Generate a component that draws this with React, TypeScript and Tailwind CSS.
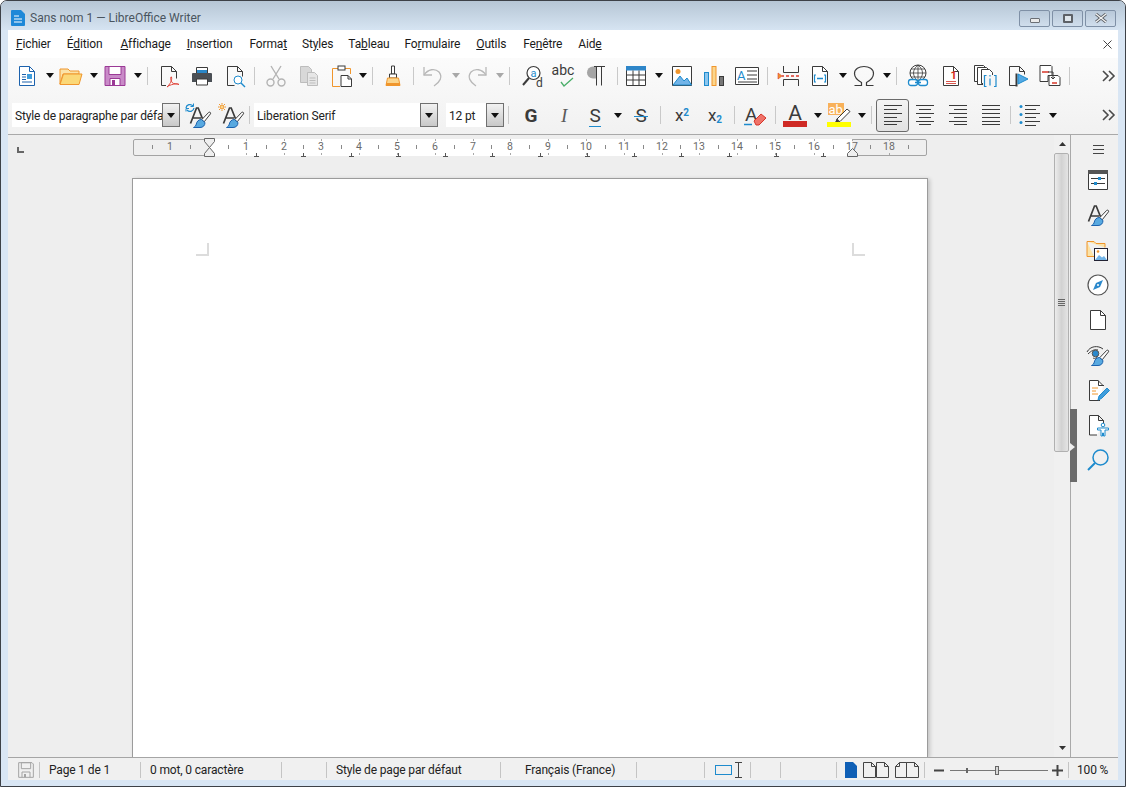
import type { ReactNode } from 'react';

const DARK = '#3b3b3b';
const BLUE = '#1e8bcd';
const ORANGE = '#f0962d';
const FONT = 'Roboto, sans-serif';

// Shared frame for the 24px toolbar glyphs
function Ico({ children, className = '', size = 24 }: { children: ReactNode; className?: string; size?: number }) {
  return (
    <svg width={size} height={size} viewBox="0 0 24 24" fill="none" strokeWidth="1" className={`shrink-0 overflow-visible ${className}`}>
      {children}
    </svg>
  );
}

function Caret({ className = '', grey = false }: { className?: string; grey?: boolean }) {
  return (
    <div className={`w-[10px] shrink-0 flex justify-center ${className}`}>
      <svg width="8" height="5" viewBox="0 0 8 5"><path d="M0 0h8L4 5z" fill={grey ? '#a8a8a8' : '#111'} /></svg>
    </div>
  );
}

function Sep({ className = '' }: { className?: string }) {
  return <div className={`w-px h-[18px] shrink-0 bg-[#c9c9c9] ${className}`} />;
}

function More() {
  return (
    <svg width="16" height="14" viewBox="0 0 16 14" fill="none" stroke="#4a4a4a" strokeWidth="1.6" className="shrink-0">
      <path d="M2 2l5 5-5 5M8 2l5 5-5 5" />
    </svg>
  );
}

function Page({ stroke = DARK, fill = '#fff' }: { stroke?: string; fill?: string }) {
  return (
    <>
      <path d="M4.5 2.5h10l5 5v14h-15z" stroke={stroke} fill={fill} />
      <path d="M14.5 2.5v5h5" stroke={stroke} />
    </>
  );
}

/* ---------- standard toolbar icons ---------- */
const NewDoc = () => (
  <Ico>
    <Page stroke="#1c62ad" />
    <path d="M7 10.5h4M7 13h4M7 15.500h4M7 18h10" stroke="#1c62ad" />
    <rect x="12" y="10" width="5" height="5" fill="#3f9ddc" />
  </Ico>
);
const OpenIco = () => (
  <Ico>
    <path d="M1 5h8l2 2h9v3H4L1 20z" fill="#fbe3a8" stroke={ORANGE} />
    <path d="M1 20.500L4.500 10H23l-3 10.500z" fill="#fbd878" stroke={ORANGE} />
  </Ico>
);
const SaveIco = () => (
  <Ico>
    <path d="M2 2.500h20v19H2z" fill="#c98bc8" stroke="#9b3a96" />
    <path d="M6 2.500h12v8H6z" fill="#fff" stroke="#9b3a96" />
    <path d="M7 21.500v-7h10v7z" fill="#fff" stroke="#9b3a96" />
    <rect x="9" y="16" width="3" height="5" fill="#9b3a96" />
  </Ico>
);
const PdfIco = () => (
  <Ico>
    <path d="M9 21.500H4.500v-19h10l5 5v7M14.500 2.500v5h5" stroke={DARK} />
    <path d="M10 23c2.500-2 5.500-7 4.500-10-1.500-1-1 3.500 1 6 1 1 5 .5 6.500 1.500-2.500-1.500-9 0-12 2.500z" stroke="#e0443a" fill="#fff" />
  </Ico>
);
const PrintIco = () => (
  <Ico>
    <path d="M6.500 9V3.500h11V9" stroke={DARK} fill="#fff" />
    <rect x="7" y="6" width="10" height="3" fill="#2b87c8" />
    <path d="M2 10a1 1 0 011-1h18a1 1 0 011 1v8H2z" fill="#4a4f55" />
    <path d="M6.500 15h11v6h-11z" fill="#fff" stroke={DARK} />
  </Ico>
);
const PreviewIco = () => (
  <Ico>
    <path d="M4.500 2.500h10l5 5v5M14.500 2.500v5h5M4.500 2.500v19h7" stroke={DARK} />
    <circle cx="15" cy="16" r="4" stroke={BLUE} fill="#fff" />
    <path d="M18 19l4 4" stroke={BLUE} strokeWidth="1.500" />
  </Ico>
);
const CutIco = () => (
  <Ico>
    <g stroke="#b4b4b4" strokeWidth="1.400">
      <path d="M7 2l8 13M17 2L9 15" />
      <circle cx="6.500" cy="18.500" r="3.500" />
      <circle cx="17.500" cy="18.500" r="3.500" />
    </g>
  </Ico>
);
const CopyIco = () => (
  <Ico>
    <path d="M3.500 2.500h8l3 3v13h-11z" fill="#d8d8d8" stroke="#bdbdbd" />
    <path d="M10.500 8.500h7l3 3v10h-10z" fill="#e6e6e6" stroke="#bdbdbd" />
    <path d="M12.500 14h6M12.500 16.500h6M12.500 19h6" stroke="#bdbdbd" />
  </Ico>
);
const PasteIco = () => (
  <Ico>
    <path d="M8 4.500H2.500v18H10M15 4.500h5.500V10" stroke={ORANGE} />
    <rect x="8" y="2" width="7" height="4" fill="#fff" stroke={DARK} />
    <path d="M11 11.500h7l3.500 3.500v7.500H11z" fill="#fff" stroke={DARK} />
    <path d="M18 11.500V15h3.500" stroke={DARK} />
  </Ico>
);
const BrushIco = () => (
  <Ico>
    <path d="M10.500 2h3v8h-3z" stroke={DARK} fill="#fff" />
    <path d="M8.500 10h7v4h-7z" stroke={DARK} fill="#fff" />
    <path d="M6.500 14h11l1.500 7.500H5z" fill="#fbd58c" stroke={ORANGE} />
    <path d="M5 19h14v2.500H5z" fill={ORANGE} />
  </Ico>
);
const UndoIco = ({ flip = false }: { flip?: boolean }) => (
  <Ico className={flip ? '-scale-x-100' : ''}>
    <path d="M3 3v8h8" stroke="#b8b8b8" strokeWidth="1.300" />
    <path d="M3 11c4-6 11-7 15-3 4 5 1 10-5 14" stroke="#b8b8b8" strokeWidth="1.300" />
  </Ico>
);
const FindIco = () => (
  <Ico>
    <circle cx="12.500" cy="9" r="6.500" stroke={DARK} fill="#fff" strokeWidth="1.200" />
    <path d="M8 14l-6 7" stroke={DARK} strokeWidth="2" />
    <text x="12.500" y="12.500" fontSize="11" textAnchor="middle" fill={BLUE} fontFamily={FONT}>a</text>
    <text x="15" y="22.500" fontSize="12" fill={DARK} fontFamily={FONT}>d</text>
  </Ico>
);
const AbcIco = () => (
  <Ico>
    <text x="12" y="11" fontSize="14" textAnchor="middle" fill={DARK} fontFamily={FONT}>abc</text>
    <path d="M10 18l3 4 9-8" stroke="#4bae6a" strokeWidth="1.300" />
  </Ico>
);
const ParaIco = () => (
  <Ico>
    <path d="M11 2.500H8a6 6 0 000 12h3z" fill="#a5a5a5" />
    <path d="M11.500 2.500v19M16.500 2.500v19M9 2.500h11" stroke={DARK} />
  </Ico>
);
const TableIco = () => (
  <Ico>
    <path d="M2.500 2.500h19v19h-19z" fill="#fff" stroke={DARK} />
    <rect x="2" y="2" width="20" height="4.500" fill="#2e86c9" />
    <path d="M2.500 11h19M2.500 16h19M9 6.500v15M15 6.500v15" stroke={DARK} />
  </Ico>
);
const ImageIco = () => (
  <Ico>
    <path d="M2.500 2.500h19v19h-19z" fill="#fff" stroke={DARK} />
    <circle cx="8" cy="7.500" r="2.500" fill={ORANGE} />
    <path d="M3 21l7-9 4 5 3-3 4.500 7z" fill="#72b4e8" stroke={BLUE} />
  </Ico>
);
const ChartIco = () => (
  <Ico>
    <rect x="2.500" y="8.500" width="4" height="13" fill="#8cc6ee" stroke={BLUE} />
    <rect x="10" y="2.500" width="4" height="19" fill="#fbd58c" stroke={ORANGE} />
    <rect x="17.500" y="12.500" width="4" height="9" fill="#777" stroke={DARK} />
  </Ico>
);
const TextBoxIco = () => (
  <Ico>
    <path d="M.500 3.500h23v17H.500z" fill="#fff" stroke={DARK} />
    <text x="2" y="16" fontSize="13" fill={BLUE} fontFamily={FONT}>A</text>
    <path d="M12 7h10M12 11h10M12 15h10M3 18h19" stroke={DARK} />
  </Ico>
);
const BreakIco = () => (
  <Ico>
    <path d="M6.500 2v6.500h15V2M6.500 22v-6.500h15V22" stroke={DARK} />
    <path d="M5 12h2M9 12h3M14 12h3M19 12h3" stroke="#dc3a2d" strokeWidth="1.400" />
    <path d="M1 9v6l4-3z" fill={ORANGE} stroke="#dc3a2d" strokeWidth=".6" />
  </Ico>
);
const FieldIco = () => (
  <Ico>
    <Page />
    <path d="M8 11H6.500v7H8M16 11h1.500v7H16" stroke={BLUE} strokeWidth="1.200" />
    <path d="M9 14.500h6" stroke={BLUE} strokeWidth="1.500" />
  </Ico>
);
const OmegaIco = () => (
  <Ico>
    <path d="M2.500 21.500h7v-3C5 16 2.500 13 2.500 9.500 2.500 5 7 2.500 12 2.500s9.500 2.500 9.500 7c0 3.500-2.500 6.500-7 9v3h7" stroke={DARK} strokeWidth="1.200" />
  </Ico>
);
const LinkIco = () => (
  <Ico>
    <circle cx="12" cy="9" r="8" stroke={DARK} fill="#fff" />
    <path d="M4 9h16M12 1v16M12 1c-6 5-6 11 0 16M12 1c6 5 6 11 0 16M5 5h14M5 13h14" stroke={DARK} strokeWidth=".8" />
    <rect x="2.500" y="15.500" width="9" height="6" rx="2.500" stroke={BLUE} fill="#fff" strokeWidth="1.300" />
    <rect x="12.500" y="15.500" width="9" height="6" rx="2.500" stroke={BLUE} fill="#fff" strokeWidth="1.300" />
    <path d="M9 18.500h6" stroke={BLUE} strokeWidth="1.300" />
  </Ico>
);
const NoteIco = () => (
  <Ico>
    <Page />
    <text x="11.500" y="15" fontSize="11" fontWeight="bold" fill="#d62c20" fontFamily={FONT}>1</text>
    <path d="M7 17.500h10M7 19.500h10" stroke="#d8574d" />
  </Ico>
);
const PagesIco = () => (
  <Ico>
    <path d="M1.500 1.500h9l3 3v13h-12z" fill="#fff" stroke={DARK} />
    <path d="M4.500 3.500h9l3 3v14h-12z" fill="#fff" stroke={DARK} />
    <path d="M8.500 5.500h8l3 3v11h-11z" fill="#fff" stroke={DARK} />
    <rect x="10" y="11" width="14" height="12" fill="#f6f6f6" />
    <path d="M13.500 11.500h-2v11h2M21 11.500h2v11h-2M17 11v1.500M17 14.500v7" stroke={BLUE} strokeWidth="1.200" />
  </Ico>
);
const FlagIco = () => (
  <Ico>
    <path d="M11 21.500H3.500v-19h10l5 5v3M13.500 2.500v5h5" stroke={DARK} />
    <path d="M9.500 9.500h2v13h-2z" fill={DARK} />
    <path d="M12 10l10 5-10 5z" fill="#53a9e4" stroke={BLUE} />
  </Ico>
);
const CompareIco = () => (
  <Ico>
    <path d="M2 1.500h11l1 1v9h-4v6H2z" fill="#fff" stroke={DARK} />
    <path d="M4 8h7" stroke="#d9372a" strokeWidth="1.400" />
    <path d="M11 11.500h9l2 2v8h-11z" fill="#fff" stroke={DARK} />
    <path d="M14 19h5" stroke="#d9372a" strokeWidth="1.400" />
    <path d="M10 8h5v7M13 13l2 2 2-2" stroke={DARK} />
  </Ico>
);

/* ---------- formatting toolbar icons ---------- */
const BrushTip = () => (
  <>
    <path d="M20.800 7.300c1-.6 2.300.4 1.700 1.500l-6.300 8-2.600-2z" fill="#fff" stroke={DARK} />
    <path d="M13.500 14.500c-3 0-4.700 2-5.200 4.500-.3 1.500-1.300 2.800-2.800 3.500h6.500c3 0 5-2 5-5z" fill="#58a9e0" stroke="#1c62ad" />
  </>
);
const StyleA = () => (
  <>
    <path d="M2.500 18.500L8.500 3h1.700l4.800 12M5 13h8" stroke={DARK} strokeWidth="1.700" />
    <BrushTip />
  </>
);
const StyleUpdateIco = () => (
  <Ico>
    <g transform="translate(3 2)"><StyleA /></g>
    <path d="M1 5a4 4 0 017-2M9 5a4 4 0 01-7 2" stroke={BLUE} strokeWidth="1.300" />
    <path d="M8.500 .5v3h-3M1 8.500v-3h3" stroke={BLUE} />
  </Ico>
);
const StyleNewIco = () => (
  <Ico>
    <g transform="translate(3 2)"><StyleA /></g>
    <circle cx="4" cy="4" r="2" fill="#fbd58c" stroke={ORANGE} />
    <path d="M4 0v1M4 7v1M0 4h1M7 4h1M1 1l1 1M6 6l1 1M7 1L6 2M1 7l1-1" stroke={ORANGE} />
  </Ico>
);
const ClearIco = () => (
  <Ico>
    <text x="1" y="18" fontSize="19" fill={DARK} fontFamily={FONT}>A</text>
    <path d="M0 21.500h8" stroke={BLUE} strokeWidth="1.400" />
    <path d="M10 18l7-7 5 4-7 7h-3z" fill="#ef7369" stroke="#d6352a" />
  </Ico>
);
const FontColorIco = () => (
  <Ico>
    <text x="12" y="16.500" fontSize="21" textAnchor="middle" fill={DARK} fontFamily={FONT}>A</text>
    <rect x="0" y="18" width="24" height="6" fill="#cf2a25" />
  </Ico>
);
const HighlightIco = () => (
  <Ico>
    <rect x="1" y="0" width="16" height="12" fill="#f8b15a" />
    <text x="1.500" y="11" fontSize="13" fill="#fff" fontFamily={FONT}>ab</text>
    <path d="M10 16L20 6l3 2.500-10 10-4 1z" fill="#fff" stroke={DARK} />
    <path d="M8 19.500l2-4 3 3z" fill={DARK} />
    <rect x="0" y="19" width="24" height="5" fill="#ffff00" />
  </Ico>
);
const AlignIco = ({ lines }: { lines: string }) => (
  <Ico>
    <path d={lines} stroke={DARK} />
  </Ico>
);
const BulletIco = () => (
  <Ico>
    <circle cx="2" cy="3.500" r="1.500" fill={BLUE} />
    <circle cx="2" cy="11.500" r="1.500" fill={BLUE} />
    <circle cx="2" cy="19.500" r="1.500" fill={BLUE} />
    <path d="M6 2.500h15M6 6.500h11M6 10.500h15M6 14.500h11M6 18.500h15M6 22.500h11" stroke={DARK} />
  </Ico>
);

function Combo({ text, className }: { text: string; className: string }) {
  return (
    <div className={`h-[24px] shrink-0 flex bg-white ${className}`}>
      <div className="flex-1 min-w-0 overflow-hidden whitespace-nowrap pl-[3px] leading-[26px]">{text}</div>
      <div className="w-[18px] shrink-0 flex items-center justify-center border border-[#707070] bg-gradient-to-b from-[#f2f2f2] to-[#c8c8c8]">
        <svg width="8" height="5" viewBox="0 0 8 5"><path d="M0 0h8L4 5z" fill="#111" /></svg>
      </div>
    </div>
  );
}

function MenuBar() {
  return (
    <div className="h-[28px] flex items-center bg-white text-[12px] tracking-[-0.15px] text-[#1a1a1a]">
      <span className="ml-[8px]"><u>F</u>ichier</span>
      <span className="ml-[16px]">É<u>d</u>ition</span>
      <span className="ml-[18px]"><u>A</u>ffichage</span>
      <span className="ml-[16px]"><u>I</u>nsertion</span>
      <span className="ml-[17px]">Forma<u>t</u></span>
      <span className="ml-[15px]">St<u>y</u>les</span>
      <span className="ml-[15px]">Ta<u>b</u>leau</span>
      <span className="ml-[15px]">Fo<u>r</u>mulaire</span>
      <span className="ml-[16px]"><u>O</u>utils</span>
      <span className="ml-[17px]">Fe<u>n</u>être</span>
      <span className="ml-[16px]">Aid<u>e</u></span>
      <svg width="9" height="9" viewBox="0 0 9 9" stroke="#444" className="ml-auto mr-[6px] shrink-0">
        <path d="M.5.5l8 8M8.500.5l-8 8" />
      </svg>
    </div>
  );
}

function StandardBar() {
  return (
    <div className="h-[35px] flex items-center">
      <div className="ml-[7px]"><NewDoc /></div>
      <Caret className="ml-[6px]" />
      <div className="ml-[4px]"><OpenIco /></div>
      <Caret className="ml-[6px]" />
      <div className="ml-[4px]"><SaveIco /></div>
      <Caret className="ml-[6px]" />
      <Sep className="ml-[4px]" />
      <div className="ml-[9px]"><PdfIco /></div>
      <div className="ml-[9px]"><PrintIco /></div>
      <div className="ml-[9px]"><PreviewIco /></div>
      <Sep className="ml-[7px]" />
      <div className="ml-[9px]"><CutIco /></div>
      <div className="ml-[9px]"><CopyIco /></div>
      <div className="ml-[9px]"><PasteIco /></div>
      <Caret className="ml-[4px]" />
      <Sep className="ml-[4px]" />
      <div className="ml-[8px]"><BrushIco /></div>
      <Sep className="ml-[8px]" />
      <div className="ml-[7px]"><UndoIco /></div>
      <Caret grey className="ml-[6px]" />
      <div className="ml-[4px]"><UndoIco flip /></div>
      <Caret grey className="ml-[6px]" />
      <Sep className="ml-[4px]" />
      <div className="ml-[11px]"><FindIco /></div>
      <div className="ml-[6px]"><AbcIco /></div>
      <div className="ml-[10px]"><ParaIco /></div>
      <Sep className="ml-[8px]" />
      <div className="ml-[6px]"><TableIco /></div>
      <Caret className="ml-[6px]" />
      <div className="ml-[6px]"><ImageIco /></div>
      <div className="ml-[8px]"><ChartIco /></div>
      <div className="ml-[9px]"><TextBoxIco /></div>
      <Sep className="ml-[8px]" />
      <div className="ml-[9px]"><BreakIco /></div>
      <div className="ml-[7px]"><FieldIco /></div>
      <Caret className="ml-[6px]" />
      <div className="ml-[4px]"><OmegaIco /></div>
      <Caret className="ml-[6px]" />
      <Sep className="ml-[4px]" />
      <div className="ml-[9px]"><LinkIco /></div>
      <div className="ml-[9px]"><NoteIco /></div>
      <div className="ml-[10px]"><PagesIco /></div>
      <div className="ml-[9px]"><FlagIco /></div>
      <div className="ml-[8px]"><CompareIco /></div>
      <Sep className="ml-[7px]" />
      <div className="ml-auto mr-[1px]"><More /></div>
    </div>
  );
}

function FormatBar() {
  return (
    <div className="h-[42px] flex items-center border-b border-[#a9a9a9] text-[12px] tracking-[-0.15px] text-[#222] pt-[3px]">
      <Combo className="ml-[4px] w-[168px]" text="Style de paragraphe par défaut" />
      <div className="ml-[5px]"><StyleUpdateIco /></div>
      <div className="ml-[9px]"><StyleNewIco /></div>
      <Sep className="ml-[7px]" />
      <Combo className="ml-[4px] w-[184px]" text="Liberation Serif" />
      <Combo className="ml-[8px] w-[58px]" text="12 pt" />
      <Sep className="ml-[4px]" />
      <div className="ml-[10px] w-[24px] text-center font-bold text-[19px] text-[#3b3b3b] leading-none">G</div>
      <div className="ml-[9px] w-[24px] text-center italic text-[19px] text-[#5a5a5a] leading-none font-['Liberation_Serif',serif]">I</div>
      <div className="ml-[7px] w-[24px] flex flex-col items-center text-[19px] text-[#3b3b3b] leading-none mt-[2px]">
        <span>S</span>
        <div className="w-[12px] h-px bg-[#1e8bcd] mt-px" />
      </div>
      <Caret className="ml-[6px]" />
      <div className="relative ml-[6px] w-[24px] text-center text-[19px] text-[#3b3b3b] leading-none">
        S
        {/* strike bar runs wider than the letter */}
        <div className="absolute left-[5px] top-[10px] w-[14px] h-px bg-[#1e8bcd]" />
      </div>
      <Sep className="ml-[7px]" />
      <div className="ml-[9px] w-[24px] text-center text-[17px] text-[#3b3b3b] leading-none">x<sup className="text-[10px] text-[#1e8bcd] font-bold">2</sup></div>
      <div className="ml-[9px] w-[24px] text-center text-[17px] text-[#3b3b3b] leading-none">x<sub className="text-[10px] text-[#1e8bcd] font-bold">2</sub></div>
      <Sep className="ml-[7px]" />
      <div className="ml-[9px]"><ClearIco /></div>
      <Sep className="ml-[7px]" />
      <div className="ml-[7px]"><FontColorIco /></div>
      <Caret className="ml-[6px]" />
      <div className="ml-[4px]"><HighlightIco /></div>
      <Caret className="ml-[6px]" />
      <Sep className="ml-[4px]" />
      <div className="ml-[4px] w-[33px] h-[33px] flex items-center justify-center rounded-[3px] border border-[#6a6a6a] bg-gradient-to-b from-[#f4f4f4] to-[#e2e2e2]">
        <AlignIco lines="M3 2.500h18M3 6.500h13M3 10.500h18M3 14.500h13M3 18.500h18M3 21.500h13" />
      </div>
      <div className="ml-[4px]"><AlignIco lines="M3 2.500h18M6 6.500h12M3 10.500h18M6 14.500h12M3 18.500h18M6 21.500h12" /></div>
      <div className="ml-[9px]"><AlignIco lines="M3 2.500h18M8 6.500h13M3 10.500h18M8 14.500h13M3 18.500h18M8 21.500h13" /></div>
      <div className="ml-[9px]"><AlignIco lines="M3 2.500h18M3 6.500h18M3 10.500h18M3 14.500h18M3 18.500h18M3 21.500h18" /></div>
      <Sep className="ml-[7px]" />
      <div className="ml-[8px]"><BulletIco /></div>
      <Caret className="ml-[5px]" />
      <div className="ml-auto mr-[1px]"><More /></div>
    </div>
  );
}

const cmLabels: [number, string][] = [
  [246, '1'], [284, '2'], [321, '3'], [359, '4'], [397, '5'], [435, '6'], [473, '7'], [510, '8'], [548, '9'],
  [586, '10'], [624, '11'], [662, '12'], [699, '13'], [737, '14'], [775, '15'], [814, '16'], [852, '17'], [889, '18'],
];
const halfTicks = [152, 190, 228, 266, 303, 341, 378, 416, 454, 491, 529, 567, 605, 643, 680, 718, 756, 794, 833, 870, 908];
const tabStops = [256, 303, 351, 398, 445, 492, 540, 587, 634, 681, 729, 776, 823];

// The ruler is drawn: x values are given in window coordinates and offset by 133
function Ruler() {
  return (
    <svg width="796" height="21" viewBox="132 137 796 21" className="shrink-0 ml-[108px]">
      <rect x="133.500" y="139.500" width="793" height="16" rx="1.500" fill="#efefef" stroke="#a3a3a3" />
      <rect x="209" y="139" width="643" height="17" fill="#fff" />
      {halfTicks.map((x) => (
        <path key={x} d={`M${x}.5 145v4`} stroke="#8a8a8a" />
      ))}
      {cmLabels.map(([x, t]) => (
        <g key={x}>
          <path d={`M${x}.5 139v2M${x}.5 153v2`} stroke="#a8a8a8" />
          <text x={x} y="150" fontSize="10.500" textAnchor="middle" fill="#6a6a6a" fontFamily={FONT}>{t}</text>
        </g>
      ))}
      <text x="170" y="150" fontSize="10.500" textAnchor="middle" fill="#6a6a6a" fontFamily={FONT}>1</text>
      {tabStops.map((x) => (
        <path key={x} d={`M${x}.5 153v3M${x - 2} 156.500h5`} stroke="#555" />
      ))}
      <path d="M204.500 138.500h10v3l-5 6 5 6v3h-10v-3l5-6-5-6z" fill="#efefef" stroke="#666" />
      <path d="M847.500 156.500v-3l5-5 5 5v3z" fill="#efefef" stroke="#666" />
    </svg>
  );
}

function Document() {
  return (
    <div className="flex-1 min-w-0 overflow-hidden bg-[#eeeeee] flex flex-col">
      <div className="flex items-center mt-[2px]">
        <div className="ml-[9px] w-[7px] h-[6px] border-l-2 border-b-2 border-[#666] shrink-0 mt-[4px]" />
        <Ruler />
      </div>
      <div className="ml-[124px] mt-[20px] w-[796px] flex-1 bg-white border border-[#9b9b9b] border-b-0 shadow-[2px_1px_4px_rgba(0,0,0,0.18)] flex justify-between items-start pl-[63px] pr-[62px] pt-[64px]">
        <div className="w-[13px] h-[13px] border-r-2 border-b-2 border-[#dcdcdc]" />
        <div className="w-[13px] h-[13px] border-l-2 border-b-2 border-[#dcdcdc]" />
      </div>
    </div>
  );
}

function Scrollbar() {
  return (
    <div className="w-[16px] shrink-0 flex flex-col items-center bg-[#f0f0f0]">
      <div className="h-[18px] flex items-center justify-center">
        <svg width="7" height="4" viewBox="0 0 7 4"><path d="M0 4h7L3.500 0z" fill="#333" /></svg>
      </div>
      <div className="w-[15px] h-[299px] mr-px rounded-[2px] border border-[#b0b0b0] bg-gradient-to-r from-[#ececec] via-[#d2d2d2] to-[#e4e4e4] flex flex-col items-center justify-center gap-px">
        <div className="w-[7px] h-px bg-[#666]" />
        <div className="w-[7px] h-px bg-[#666]" />
        <div className="w-[7px] h-px bg-[#666]" />
        <div className="w-[7px] h-px bg-[#666]" />
      </div>
      <div className="flex-1" />
      <div className="h-[18px] flex items-center justify-center">
        <svg width="7" height="4" viewBox="0 0 7 4"><path d="M0 0h7L3.500 4z" fill="#333" /></svg>
      </div>
    </div>
  );
}

function Sidebar() {
  return (
    <div className="relative w-[48px] shrink-0 bg-[#f0f0f0] border-l border-[#a9a9a9] flex flex-col items-center pt-[2px] pl-[7px]">
      <div className="h-[24px] flex items-center">
        <svg width="11" height="9" viewBox="0 0 11 9" stroke="#444"><path d="M0 .5h11M0 4.500h11M0 8.500h11" /></svg>
      </div>
      <div className="mt-[7px] flex flex-col gap-[11px]">
        <Ico>
          <path d="M2.500 2.500h19v19h-19z" fill="#fff" stroke={DARK} />
          <rect x="2" y="2" width="20" height="4" fill="#555" />
          <path d="M5 10.500h14M5 15.500h14" stroke={DARK} />
          <rect x="12" y="9" width="3" height="3" fill={BLUE} />
          <rect x="8" y="14" width="3" height="3" fill={BLUE} />
        </Ico>
        <Ico><StyleA /></Ico>
        <Ico>
          <path d="M1 3.500h7l2 2h9v4M1 3.500v15h7" stroke={ORANGE} fill="#fbe3a8" />
          <rect x="8.500" y="10.500" width="13" height="12" fill="#fff" stroke="#223" />
          <path d="M9 22l4-5 3 2.500 2-1.500 3 4z" fill="#72b4e8" />
          <circle cx="12" cy="13.500" r="1.300" fill={ORANGE} />
        </Ico>
        <Ico>
          <circle cx="12" cy="12" r="10" stroke="#555" fill="#fff" strokeWidth="1.200" />
          <path d="M17 7l-3 7-7 3 3-7z" fill="#2a88cc" />
          <circle cx="12" cy="12" r="1" fill="#fff" />
        </Ico>
        <Ico><Page /></Ico>
        <Ico>
          <path d="M1 9c3-6 11-7 16-3M2 11c3-3 6-5 10-4M12 12c-1 3-3 4-5 3" stroke={DARK} />
          <circle cx="9.500" cy="10.500" r="3.300" fill="#2a88cc" stroke="#555" />
          <BrushTip />
        </Ico>
        <Ico>
          <path d="M17 8V7.500l-5-5H3.500v20H14" stroke={DARK} fill="#fff" />
          <path d="M12.500 2.500v5H18" stroke={DARK} />
          <path d="M6 10h6M6 13h4M6 16h6" stroke={ORANGE} />
          <path d="M12 22l1-4 8-8 2.500 2.500-8 8z" fill="#3f9ddc" stroke={BLUE} />
        </Ico>
        <Ico>
          <path d="M11 22H3.500V2.500h9l5 5v3M12.500 2.500v5h5" stroke={DARK} fill="#fff" />
          <circle cx="17" cy="12" r="1.800" stroke={BLUE} fill="#fff" />
          <path d="M11.500 15h11v2h-3.500v6h-1.500v-3h-1v3H15v-6h-3.500z" stroke={BLUE} fill="#fff" />
        </Ico>
        <Ico>
          <circle cx="14.500" cy="9.500" r="7.500" stroke={BLUE} strokeWidth="1.500" />
          <path d="M9 15l-7 7" stroke={BLUE} strokeWidth="2" />
        </Ico>
      </div>
      {/* collapse handle sits over the deck's left edge */}
      <div className="absolute top-[274px] -left-px w-[7px] h-[73px] bg-[#6b6b6b] flex items-center">
        <svg width="5" height="8" viewBox="0 0 5 8" className="mt-[2px]"><path d="M0 0l5 4-5 4z" fill="#eee" /></svg>
      </div>
    </div>
  );
}

function StatusSep() {
  return <div className="w-px h-[16px] bg-[#c4c4c4] shrink-0" />;
}

function StatusBar() {
  return (
    <div className="h-[23px] shrink-0 flex items-center bg-[#f0f0f0] border-t border-[#a5a5a5] pt-[2px] text-[12px] tracking-[-0.15px] text-[#222] whitespace-nowrap">
      <div className="w-[31px] pl-[10px] shrink-0">
        <Ico size={16}>
          <path d="M1 1h20l2 2v20H1z" fill="#f0f0f0" stroke="#a4a4a4" strokeWidth="1.500" />
          <path d="M5 1h14v9H5zM6 23v-8h12v8" stroke="#a4a4a4" strokeWidth="1.500" />
          <rect x="9" y="18" width="3" height="5" fill="#a4a4a4" />
        </Ico>
      </div>
      <StatusSep />
      <div className="w-[100px] pl-[9px] shrink-0">Page 1 de 1</div>
      <StatusSep />
      <div className="w-[140px] pl-[9px] shrink-0">0 mot, 0 caractère</div>
      <StatusSep />
      <div className="w-[44px] shrink-0" />
      <StatusSep />
      <div className="w-[173px] pl-[9px] shrink-0">Style de page par défaut</div>
      <StatusSep />
      <div className="w-[135px] pl-[24px] shrink-0">Français (France)</div>
      <StatusSep />
      <div className="w-[67px] shrink-0" />
      <StatusSep />
      <div className="w-[45px] shrink-0 flex items-center pl-[10px] gap-[3px]">
        <div className="w-[17px] h-[10px] border border-[#1e8bcd]" />
        <svg width="7" height="16" viewBox="0 0 7 16" stroke="#444"><path d="M0 .5h7M0 15.500h7M3.500 .5v15" /></svg>
      </div>
      <StatusSep />
      <div className="w-[29px] shrink-0" />
      <StatusSep />
      <div className="w-[55px] shrink-0" />
      <StatusSep />
      <div className="w-[87px] shrink-0 flex items-center pl-[8px]">
        <svg width="12" height="16" viewBox="0 0 12 16"><path d="M0 0h8l4 4v12H0z" fill="#0f5fb5" /></svg>
        <svg width="26" height="16" viewBox="0 0 26 16" fill="none" stroke="#444" className="ml-[6px]">
          <path d="M.5.5h8l4 4v11h-12zM8.500.5v4h4M13.500.5h8l4 4v11h-12zM21.500.5v4h4" />
        </svg>
        <svg width="24" height="16" viewBox="0 0 24 16" fill="none" stroke="#444" className="ml-[6px]">
          <path d="M11.500 15.500H.5v-11l4-4h7zM4.500.5v4h-4M11.500.5h8l4 4v11h-12z" />
          <path d="M19.500.5v4h4" />
        </svg>
      </div>
      <StatusSep />
      <div className="w-[143px] shrink-0 flex items-center pl-[9px]">
        <svg width="10" height="3" viewBox="0 0 10 3" className="shrink-0"><rect width="10" height="2" y=".5" fill="#444" /></svg>
        <div className="relative w-[98px] h-px bg-[#777] ml-[6px] shrink-0">
          <div className="absolute left-[16px] -top-[2px] w-[2px] h-[5px] bg-[#666]" />
          <div className="absolute left-[45px] -top-[4px] w-[4px] h-[9px] bg-[#d8d8d8] border border-[#666]" />
        </div>
        <svg width="11" height="11" viewBox="0 0 11 11" stroke="#444" strokeWidth="2" className="ml-[4px] shrink-0"><path d="M0 5.500h11M5.500 0v11" /></svg>
      </div>
      <StatusSep />
      <div className="w-[49px] pl-[8px] shrink-0">100 %</div>
    </div>
  );
}

export default function App() {
  return (
    <div className="w-[1126px] h-[787px] flex flex-col overflow-hidden rounded-t-[7px] border border-[#3d4147] bg-[#d9e6f4] font-['Roboto','Liberation_Sans',sans-serif]">
      {/* Title bar */}
      <div className="h-[29px] shrink-0 flex items-center bg-gradient-to-b from-[#b6c6d5] to-[#d6e4f2] pl-[10px] pr-[9px] pt-[5px]">
        <svg width="14" height="16" viewBox="0 0 14 16" className="shrink-0">
          <path d="M1 0h9l4 4v11a1 1 0 01-1 1H1a1 1 0 01-1-1V1a1 1 0 011-1z" fill="#1e88d8" />
          <path d="M3 6h5M3 9h8M3 12h8" stroke="#fff" />
        </svg>
        <span className="ml-[5px] text-[12px] text-[#4a5560]">Sans nom 1 — LibreOffice Writer</span>
        <div className="ml-auto flex gap-[2px]">
          <div className="w-[31px] h-[17px] rounded-[2px] border border-[#7f90a6] bg-gradient-to-b from-[#b8c8d9] to-[#d0deec] flex items-center justify-center">
            <div className="w-[10px] h-[5px] mt-[5px] rounded-[1px] border border-[#6b6f75] bg-[#eaeaea]" />
          </div>
          <div className="w-[31px] h-[17px] rounded-[2px] border border-[#7f90a6] bg-gradient-to-b from-[#b8c8d9] to-[#d0deec] flex items-center justify-center">
            <div className="w-[10px] h-[9px] border-2 border-[#5d6167] rounded-[1px] bg-[#dfe6ec]" />
          </div>
          <div className="w-[31px] h-[17px] rounded-[2px] border border-[#7f90a6] bg-gradient-to-b from-[#b8c8d9] to-[#d0deec] flex items-center justify-center">
            <svg width="12" height="10" viewBox="0 0 12 10" fill="none">
              <path d="M1 1l10 8M11 1L1 9" stroke="#5d6167" strokeWidth="3" />
              <path d="M1 1l10 8M11 1L1 9" stroke="#f2f2f2" strokeWidth="1.300" />
            </svg>
          </div>
        </div>
      </div>
      {/* Application body */}
      <div className="flex-1 min-h-0 mx-[7px] mb-[6px] flex flex-col bg-[#f0f0f0]">
        <MenuBar />
        <div className="bg-gradient-to-b from-[#fbfbfb] to-[#f1f1f1]">
          <StandardBar />
          <FormatBar />
        </div>
        <div className="flex-1 min-h-0 flex">
          <Document />
          <Scrollbar />
          <Sidebar />
        </div>
        <StatusBar />
      </div>
    </div>
  );
}
